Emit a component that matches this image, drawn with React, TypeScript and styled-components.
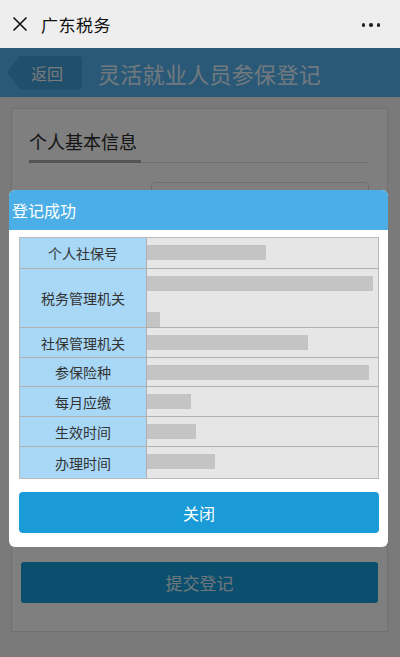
import React from "react";
import styled, { createGlobalStyle } from "styled-components";

const Global = createGlobalStyle`
  html, body { margin: 0; padding: 0; background: #f4f4f4; }
  body { font-family: "Noto Sans CJK SC", "Noto Sans", sans-serif; }
  * { box-sizing: border-box; }
`;

const Page = styled.div`
  width: 400px;
  min-height: 657px;
  background: #f4f4f4;
  position: relative;
  overflow: hidden;
`;

const WxBar = styled.div`
  height: 48px;
  background: #eeeeee;
  display: flex;
  align-items: center;
  padding: 0 20px 0 12px;
  position: relative;
  z-index: 3;
`;

const WxTitle = styled.div`
  font-size: 17px;
  color: #111;
  margin-left: 13px;
  flex: 1;
  letter-spacing: 0.5px;
`;

const Dots = styled.div`
  display: flex;
  gap: 4px;
  margin-top: 2px;
`;

const Dot = styled.span`
  width: 3.5px;
  height: 3.5px;
  border-radius: 50%;
  background: #222;
`;

const AppHeader = styled.div`
  height: 49px;
  background: #55b2ee;
  display: flex;
  align-items: center;
  padding-left: 7px;
  gap: 16px;
`;

const BackBtn = styled.div`
  width: 75px;
  height: 34px;
  background: #3e9ed6;
  clip-path: polygon(0 50%, 13px 0, 100% 0, 100% 100%, 13px 100%);
  border-radius: 0 4px 4px 0;
  display: flex;
  align-items: center;
  padding-left: 24px;
  font-size: 16px;
  color: #f2f6f8;
`;

const AppTitle = styled.div`
  font-size: 22px;
  color: #e2f2ff;
  letter-spacing: 0.3px;
`;

const Body = styled.div`
  padding: 11px 12px 20px 11px;
`;

const Card = styled.div`
  background: #ffffff;
  border: 1px solid #e2e2e2;
  padding: 21px 18px 28px 17px;
  display: flex;
  flex-direction: column;
`;

const SectionTitle = styled.div`
  font-size: 18px;
  color: #2a2a2a;
  line-height: 22px;
  padding-bottom: 8px;
`;

const Rule = styled.div`
  height: 3px;
  border-bottom: 1px solid #e0e0e0;
  margin-bottom: 19px;
`;

const RuleMark = styled.div`
  width: 112px;
  height: 3px;
  background: #a8a8a8;
`;

const FormRow = styled.div`
  display: flex;
  align-items: center;
  height: 40px;
  margin-bottom: 10px;
  padding-left: 122px;
`;

const Input = styled.div`
  flex: 1;
  height: 40px;
  border: 1px solid #dcdcdc;
  border-radius: 4px;
  background: #fff;
`;

const Submit = styled.div`
  margin: 30px -9px 0 -8px;
  height: 41px;
  background: #189cdc;
  border-radius: 3px;
  display: flex;
  align-items: center;
  justify-content: center;
  font-size: 17px;
  color: #dceef6;
`;

const Overlay = styled.div`
  position: absolute;
  left: 0;
  right: 0;
  top: 48px;
  bottom: 0;
  background: rgba(0, 0, 0, 0.5);
  z-index: 1;
`;

const Dialog = styled.div`
  position: absolute;
  top: 190px;
  left: 9px;
  width: 379px;
  background: #fff;
  border-radius: 6px;
  overflow: hidden;
  z-index: 2;
`;

const DialogHead = styled.div`
  height: 40px;
  background: #4baee6;
  color: #fff;
  font-size: 16px;
  display: flex;
  align-items: center;
  padding-left: 3px;
`;

const DialogBody = styled.div`
  padding: 7px 9px 14px 10px;
`;

const Table = styled.div`
  border: 1px solid #b9b9b9;
  display: grid;
  grid-template-columns: 127px 1fr;
`;

const Label = styled.div<{ $h: number; $last?: boolean }>`
  height: ${(p) => p.$h}px;
  background: #a8d8f6;
  border-right: 1px solid #b0b0b0;
  border-bottom: ${(p) => (p.$last ? "none" : "1px solid #b0b0b0")};
  display: flex;
  align-items: center;
  justify-content: center;
  font-size: 14px;
  color: #333;
`;

const Value = styled.div<{ $h: number; $last?: boolean }>`
  height: ${(p) => p.$h}px;
  background: #e6e6e6;
  border-bottom: ${(p) => (p.$last ? "none" : "1px solid #b0b0b0")};
  display: flex;
  flex-direction: column;
  justify-content: flex-start;
  padding-top: 7px;
  padding-right: 5px;
  gap: 21px;
`;

const Bar = styled.div<{ $w: number }>`
  width: ${(p) => p.$w}px;
  max-width: 100%;
  height: 15px;
  background: #c4c4c4;
`;

const CloseBtn = styled.div`
  margin-top: 13px;
  height: 41px;
  background: #1a9bd7;
  border-radius: 4px;
  display: flex;
  align-items: center;
  justify-content: center;
  color: #fff;
  font-size: 16px;
`;

const rows: { label: string; bars: number[]; h: number }[] = [
  { label: "个人社保号", bars: [119], h: 31 },
  { label: "税务管理机关", bars: [226, 13], h: 59 },
  { label: "社保管理机关", bars: [161], h: 30 },
  { label: "参保险种", bars: [222], h: 29 },
  { label: "每月应缴", bars: [44], h: 30 },
  { label: "生效时间", bars: [49], h: 30 },
  { label: "办理时间", bars: [68], h: 31 },
];

const formFields = ["a", "b", "c", "d", "e", "f", "g"];

export default function App() {
  return (
    <Page>
      <Global />
      <WxBar>
        <svg width="16" height="16" viewBox="0 0 16 16">
          <path d="M1.5 1.5 L14.5 14.5 M14.5 1.5 L1.5 14.5" stroke="#111" strokeWidth="1.6" fill="none" />
        </svg>
        <WxTitle>广东税务</WxTitle>
        <Dots>
          <Dot />
          <Dot />
          <Dot />
        </Dots>
      </WxBar>
      <AppHeader>
        <BackBtn>返回</BackBtn>
        <AppTitle>灵活就业人员参保登记</AppTitle>
      </AppHeader>
      <Body>
        <Card>
          <SectionTitle>个人基本信息</SectionTitle>
          <Rule>
            <RuleMark />
          </Rule>
          {formFields.map((k) => (
            <FormRow key={k}>
              <Input />
            </FormRow>
          ))}
          <Submit>提交登记</Submit>
        </Card>
      </Body>
      <Overlay />
      <Dialog>
        <DialogHead>登记成功</DialogHead>
        <DialogBody>
          <Table>
            {rows.map((r, i) => (
              <React.Fragment key={r.label}>
                <Label $h={r.h} $last={i === rows.length - 1}>{r.label}</Label>
                <Value $h={r.h} $last={i === rows.length - 1}>
                  {r.bars.map((w, j) => (
                    <Bar key={j} $w={w} />
                  ))}
                </Value>
              </React.Fragment>
            ))}
          </Table>
          <CloseBtn>关闭</CloseBtn>
        </DialogBody>
      </Dialog>
    </Page>
  );
}
